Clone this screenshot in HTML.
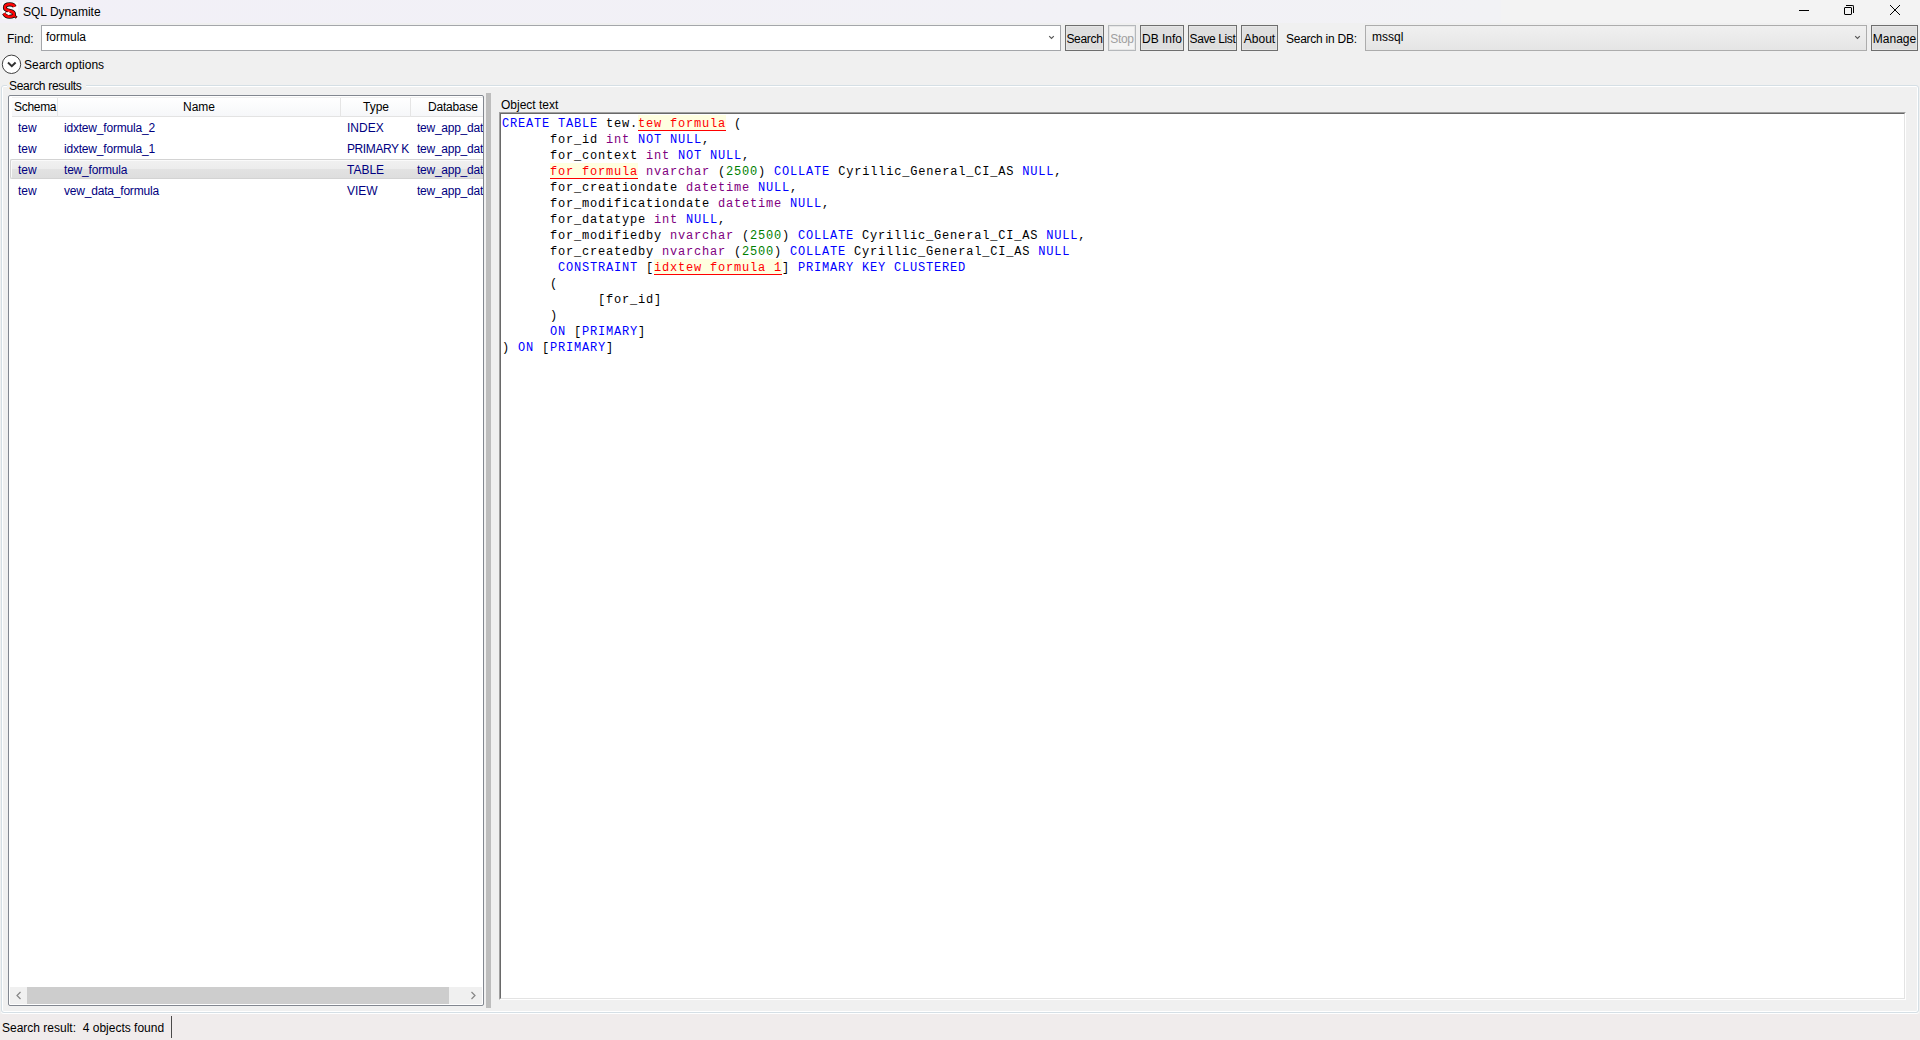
<!DOCTYPE html>
<html><head><meta charset="utf-8">
<style>
*{margin:0;padding:0;box-sizing:border-box}
html,body{width:1920px;height:1040px;overflow:hidden;background:#f0f0f0;font-family:"Liberation Sans",sans-serif;font-size:12px;color:#000}
.a{position:absolute}
.t{position:absolute;white-space:pre;line-height:14px}
#title{left:0;top:0;width:1920px;height:23px;background:linear-gradient(90deg,#f2f0f7 0px,#f2f1f6 1100px,#f2f2f5 1500px,#f3f3f3 1502px,#f3f3f3 1920px)}
.btn{position:absolute;top:25px;height:26px;background:#dedede;box-shadow:inset 0 0 0 1px #e6e6e6;border:1px solid #6e6e6e}
.btn span{position:absolute;left:0;right:0;top:6px;text-align:center;white-space:pre;line-height:14px}
.code{position:absolute;left:502px;top:116px;font-family:"Liberation Mono",monospace;font-size:12px;letter-spacing:0.8px;line-height:16px;white-space:pre;color:#000}
.k{color:#0000ff}.p{color:#800080}.g{color:#008000}
.h{color:#ff0000;background:#ffffe0;box-shadow:inset 0 -1px 0 #ff0000;padding-top:2px}
.row{position:absolute;left:9px;width:474px;height:21px;color:#000080;overflow:hidden}
.row span{position:absolute;top:4px;white-space:pre;line-height:14px}
.hdr span{position:absolute;top:2px;white-space:pre;line-height:14px}
</style></head><body>
<!-- title bar -->
<div id="title" class="a"></div>
<svg class="a" style="left:0px;top:0px" width="22" height="22" viewBox="0 0 22 22">
<rect x="2" y="2" width="16" height="17" fill="#fafafa"/>
<g transform="translate(10 11) scale(0.88 0.9) translate(-10 -11)">
<path d="M15.2 6.3 C14.5 4.2 12.5 3.6 9.8 3.6 C6.5 3.6 4.2 4.8 4.2 7.3 C4.2 9.8 7.5 10.2 10.3 11 C13 11.7 14.6 12.5 14.6 14.6 C14.6 16.6 12.2 17.4 9.3 17.4 C6.3 17.4 4.3 15.8 3.1 13.6" fill="none" stroke="#111" stroke-width="4.6"/>
<path d="M14.3 15.6 L17.6 18.6" stroke="#111" stroke-width="3"/>
<path d="M15.2 6.3 C14.5 4.2 12.5 3.6 9.8 3.6 C6.5 3.6 4.2 4.8 4.2 7.3 C4.2 9.8 7.5 10.2 10.3 11 C13 11.7 14.6 12.5 14.6 14.6 C14.6 16.6 12.2 17.4 9.3 17.4 C6.3 17.4 4.3 15.8 3.1 13.6" fill="none" stroke="#ff0606" stroke-width="2.8"/>
<path d="M14.3 15.6 L17.2 18.2" stroke="#ff0606" stroke-width="1.4"/>
</g>
<path d="M1.5 11.6 L5 11.6" stroke="#fff" stroke-width="1" fill="none"/>
<path d="M9.5 12 L6.8 13.3 L9.2 14.8" stroke="#fff" stroke-width="1.2" fill="none"/>
</svg>
<div class="t" style="left:23px;top:5px">SQL Dynamite</div>
<!-- window controls -->
<div class="a" style="left:1799px;top:10px;width:10px;height:1px;background:#000"></div>
<div class="a" style="left:1846px;top:5px;width:8px;height:8px;border-top:1px solid #000;border-right:1px solid #000;border-top-right-radius:2px"></div>
<div class="a" style="left:1844px;top:7px;width:8px;height:8px;border:1px solid #000;border-radius:1px;background:#f3f3f3"></div>
<svg class="a" style="left:1889px;top:4px" width="12" height="12" viewBox="0 0 12 12"><path d="M1 1L11 11M11 1L1 11" stroke="#000" stroke-width="1"/></svg>

<!-- find row -->
<div class="t" style="left:7px;top:32px">Find:</div>
<div class="a" style="left:41px;top:25px;width:1020px;height:26px;background:#fff;border:1px solid #a4a6aa"></div>
<div class="t" style="left:46px;top:30px">formula</div>
<svg class="a" style="left:1048px;top:35px" width="7" height="5" viewBox="0 0 7 5"><path d="M1.2 1.2L3.5 3.5L5.8 1.2" stroke="#555" stroke-width="1.15" fill="none"/></svg>
<div class="btn" style="left:1065px;width:39px"><span style="letter-spacing:-0.3px">Search</span></div>
<div class="btn" style="left:1108px;width:28px;background:#f4f4f4;border-color:#b5b8bb;color:#a0a0a0"><span style="letter-spacing:-0.3px">Stop</span></div>
<div class="btn" style="left:1140px;width:44px"><span>DB Info</span></div>
<div class="btn" style="left:1188px;width:49px"><span style="letter-spacing:-0.4px">Save List</span></div>
<div class="btn" style="left:1241px;width:37px"><span>About</span></div>
<div class="t" style="left:1286px;top:32px;letter-spacing:-0.25px">Search in DB:</div>
<div class="a" style="left:1365px;top:25px;width:502px;height:26px;background:linear-gradient(#f0f0f0,#e5e5e5);border:1px solid #acacac"></div>
<div class="t" style="left:1372px;top:30px">mssql</div>
<svg class="a" style="left:1854px;top:35px" width="7" height="5" viewBox="0 0 7 5"><path d="M1.2 1.2L3.5 3.5L5.8 1.2" stroke="#555" stroke-width="1.15" fill="none"/></svg>
<div class="btn" style="left:1871px;width:47px"><span>Manage</span></div>

<!-- search options -->
<svg class="a" style="left:1px;top:54px" width="21" height="21" viewBox="0 0 21 21"><circle cx="10.5" cy="10.3" r="9.2" fill="#fff" stroke="#404040" stroke-width="1"/><path d="M7 8.6L10.8 12.2L14.6 8.6" fill="none" stroke="#303030" stroke-width="2"/></svg>
<div class="t" style="left:24px;top:58px">Search options</div>

<!-- group box -->
<div class="a" style="left:1px;top:85px;width:1918px;height:928px;border:1px solid #d5dfe5;border-radius:3px;box-shadow:inset 0 0 0 1px #fff, 0 1px 0 #fff"></div>
<div class="t" style="left:7px;top:79px;padding:0 4px 0 2px;background:#f0f0f0;letter-spacing:-0.3px">Search results</div>

<!-- list -->
<div class="a" style="left:8px;top:95px;width:476px;height:911px;background:#fff;border:1px solid #828790;border-radius:2px"></div>
<div class="a hdr" style="left:12px;top:97px;width:471px;height:20px;background:linear-gradient(#fff,#f6f7f9);border-top:1px solid #f0f0f0;border-bottom:1px solid #e3e3e3">
 <div class="a" style="left:45px;top:0;width:1px;height:19px;background:#e5e5e5"></div>
 <div class="a" style="left:328px;top:0;width:1px;height:19px;background:#e5e5e5"></div>
 <div class="a" style="left:398px;top:0;width:1px;height:19px;background:#e5e5e5"></div>
 <span style="left:2px;letter-spacing:-0.3px">Schema</span>
 <span style="left:171px">Name</span>
 <span style="left:351px">Type</span>
 <span style="left:416px;letter-spacing:-0.2px">Database</span>
</div>
<div class="row" style="top:117px"><span style="left:9px">tew</span><span style="left:55px;letter-spacing:-0.2px">idxtew_formula_2</span><span style="left:338px">INDEX</span><span style="left:408px;letter-spacing:-0.25px">tew_app_dat</span></div>
<div class="row" style="top:138px"><span style="left:9px">tew</span><span style="left:55px;letter-spacing:-0.2px">idxtew_formula_1</span><span style="left:338px;letter-spacing:-0.4px">PRIMARY K</span><span style="left:408px;letter-spacing:-0.25px">tew_app_dat</span></div>
<div class="a" style="left:10px;top:159px;width:473px;height:20px;background:linear-gradient(#f1f1f1 0%,#ececec 50%,#e2e2e2 51%,#dedede 100%);border:1px solid #d3d3d3;border-right:0;border-radius:2px 0 0 2px;box-shadow:inset 1px 1px 0 #fafafa"></div>
<div class="row" style="top:159px;height:20px;color:#000080"><span style="left:9px;top:4px">tew</span><span style="left:55px;top:4px;letter-spacing:-0.2px">tew_formula</span><span style="left:338px;top:4px">TABLE</span><span style="left:408px;top:4px;letter-spacing:-0.25px">tew_app_dat</span></div>
<div class="row" style="top:180px"><span style="left:9px">tew</span><span style="left:55px;letter-spacing:-0.2px">vew_data_formula</span><span style="left:338px">VIEW</span><span style="left:408px;letter-spacing:-0.25px">tew_app_dat</span></div>
<!-- h scrollbar -->
<div class="a" style="left:10px;top:987px;width:472px;height:17px;background:#f0f0f0"></div>
<div class="a" style="left:27px;top:987px;width:422px;height:17px;background:#cdcdcd"></div>
<svg class="a" style="left:15px;top:991px" width="8" height="9" viewBox="0 0 8 9"><path d="M5.5 1L2 4.5L5.5 8" stroke="#858585" stroke-width="1.2" fill="none"/></svg>
<svg class="a" style="left:469px;top:991px" width="8" height="9" viewBox="0 0 8 9"><path d="M2.5 1L6 4.5L2.5 8" stroke="#858585" stroke-width="1.2" fill="none"/></svg>

<!-- splitter -->
<div class="a" style="left:486px;top:93px;width:5px;height:915px;background:#bdbdbd"></div>

<!-- object text -->
<div class="t" style="left:501px;top:98px">Object text</div>
<div class="a" style="left:499px;top:112px;width:1407px;height:888px;background:#fff;border-top:1px solid #a0a0a0;border-left:1px solid #a0a0a0;border-right:1px solid #fff;border-bottom:1px solid #fff"></div>
<div class="a" style="left:500px;top:113px;width:1405px;height:886px;border-top:1px solid #696969;border-left:1px solid #696969;border-right:1px solid #e3e3e3;border-bottom:1px solid #e3e3e3"></div>
<div class="code"><span class="k">CREATE TABLE</span> tew.<span class="h">tew formula</span> (
      for_id <span class="p">int</span> <span class="k">NOT NULL</span>,
      for_context <span class="p">int</span> <span class="k">NOT NULL</span>,
      <span class="h">for formula</span> <span class="p">nvarchar</span> (<span class="g">2500</span>) <span class="k">COLLATE</span> Cyrillic_General_CI_AS <span class="k">NULL</span>,
      for_creationdate <span class="p">datetime</span> <span class="k">NULL</span>,
      for_modificationdate <span class="p">datetime</span> <span class="k">NULL</span>,
      for_datatype <span class="p">int</span> <span class="k">NULL</span>,
      for_modifiedby <span class="p">nvarchar</span> (<span class="g">2500</span>) <span class="k">COLLATE</span> Cyrillic_General_CI_AS <span class="k">NULL</span>,
      for_createdby <span class="p">nvarchar</span> (<span class="g">2500</span>) <span class="k">COLLATE</span> Cyrillic_General_CI_AS <span class="k">NULL</span>
       <span class="k">CONSTRAINT</span> [<span class="h">idxtew formula 1</span>] <span class="k">PRIMARY KEY CLUSTERED</span>
      (
            [for_id]
      )
      <span class="k">ON</span> [<span class="k">PRIMARY</span>]
) <span class="k">ON</span> [<span class="k">PRIMARY</span>]
</div>

<!-- status bar -->
<div class="a" style="left:0;top:1014px;width:1920px;height:26px;background:#f0ecec"></div>
<div class="t" style="left:2px;top:1021px">Search result:  4 objects found</div>
<div class="a" style="left:171px;top:1016px;width:1px;height:22px;background:#4a4a4a"></div>
</body></html>
